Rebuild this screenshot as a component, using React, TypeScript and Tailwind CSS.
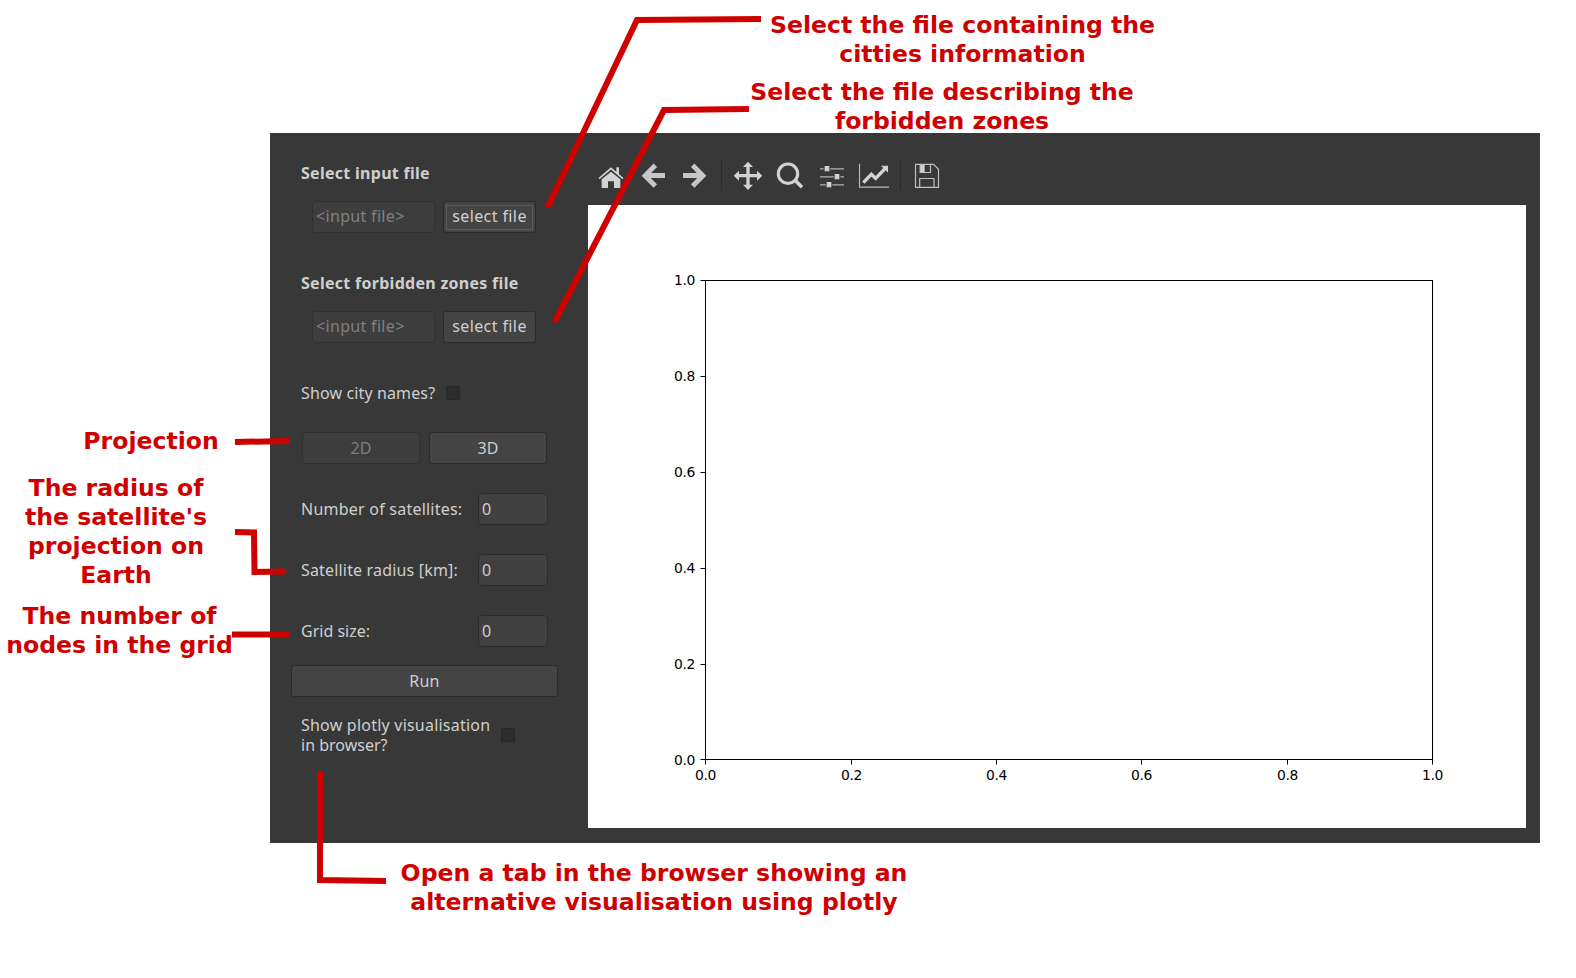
import type { ReactNode } from "react";

const BUTTON =
  "flex items-center justify-center rounded-[3px] border border-[#2b2b2b] bg-[#444444] text-[#cfcfcf]";
const BUTTON_DISABLED =
  "flex items-center justify-center rounded-[3px] border border-[#303030] bg-[#3d3d3d] text-[#7d7d7d]";
const INPUT = "flex items-center rounded-[4px] border border-[#2b2b2b] bg-[#404040] pl-[3px]";

function FileRow({ focused }: { focused?: boolean }) {
  return (
    <div className="ml-[42px] flex h-8 gap-2">
      <div className="flex w-[123px] items-center rounded-[4px] border border-[#303030] bg-[#3d3d3d] pb-[2px] pl-[3px] tracking-[0.32px] text-[#808080]">
        &lt;input file&gt;
      </div>
      <button className={`${BUTTON} w-[93px] p-[2px] tracking-[0.4px]`}>
        <span
          className={`flex h-[25px] w-[87px] items-center justify-center border pb-[2px] whitespace-nowrap ${
            focused ? "border-[#5a5a5a]" : "border-transparent"
          }`}
        >
          select file
        </span>
      </button>
    </div>
  );
}

function NumberRow({ label }: { label: string }) {
  return (
    <div className="ml-[31px] flex h-8 w-[247px] items-center justify-between">
      <span className="whitespace-nowrap">{label}</span>
      <div className={`${INPUT} h-8 w-[70px] pb-px`}>0</div>
    </div>
  );
}

function CheckBox() {
  return <span className="block size-[14px] rounded-[2px] border border-[#272727] bg-[#2d2d2d]" />;
}

function ToolIcon({ x, children }: { x: number; children: ReactNode }) {
  return (
    <svg className="h-[50px] w-[42px] shrink-0" viewBox={`${x} 30 126 150`} fill="#d2d2d2">
      {children}
    </svg>
  );
}

function Separator() {
  return (
    <div className="flex h-[50px] w-[11px] justify-center py-[10px]">
      <div className="w-px bg-[#2b2b2b]" />
    </div>
  );
}

function Toolbar() {
  return (
    <div className="flex h-[72px] pt-[17px] pl-[2px]">
      <ToolIcon x={30}>
        <path d="M57 116 L93 85 L129 116" fill="none" stroke="#d2d2d2" strokeWidth="5" />
        <path d="M109 82 h8 v25 l-8 -7 z" />
        <path d="M65 118 L93 95 L121 118 V144 H102 V124 H84 V144 H65 Z" />
      </ToolIcon>
      <ToolIcon x={156}>
        <path
          d="M255 106.500 H198 M226 76 L195 107 L226 138"
          fill="none"
          stroke="#c6c6c6"
          strokeWidth="14.500"
        />
      </ToolIcon>
      <ToolIcon x={282}>
        <path
          d="M309 106.500 H366 M338 76 L369 107 L338 138"
          fill="none"
          stroke="#c6c6c6"
          strokeWidth="14.500"
        />
      </ToolIcon>
      <Separator />
      <ToolIcon x={441}>
        <path d="M504 65 L519 81 H509 V102 H531 V92 L547 107 L531 122 V112 H509 V134 H519 L504 150 L489 134 H499 V112 H477 V122 L461 107 L477 92 V102 H499 V81 H489 Z" />
      </ToolIcon>
      <ToolIcon x={567}>
        <circle cx="624" cy="101" r="29" fill="none" stroke="#d2d2d2" strokeWidth="9.500" />
        <path d="M645 121 L666 142" stroke="#d2d2d2" strokeWidth="10.500" />
      </ToolIcon>
      <ToolIcon x={693}>
        <path
          d="M720 86.500 H792 M720 110.500 H792 M720 134.500 H792"
          stroke="#b4b4b4"
          strokeWidth="3.500"
        />
        <path
          d="M731 76 h20 v20 h-20 z M761 100 h20 v20 h-20 z M737 124 h20 v20 h-20 z"
          fill="#383838"
        />
        <path d="M734 78 h14 v16 h-14 z M764 102 h14 v16 h-14 z M740 126 h14 v16 h-14 z" />
      </ToolIcon>
      <ToolIcon x={819}>
        <path d="M838.500 71 V141.500 H927" fill="none" stroke="#b8b8b8" strokeWidth="3.500" />
        <path
          d="M850 128 L874 103 L887 115 L914 87"
          fill="none"
          stroke="#d2d2d2"
          strokeWidth="10"
        />
        <path d="M903 77 H924 V98 Z" />
      </ToolIcon>
      <Separator />
      <ToolIcon x={978}>
        <g fill="none" stroke="#c0c0c0" strokeWidth="3.500">
          <path d="M1006.500 73 H1061 L1075.500 88 V142 H1006.500 Z" />
          <path d="M1019 142 V115.500 H1062 V142" />
          <path d="M1020.500 73 V97.500 H1051.500 V73" />
        </g>
        <path d="M1021 74 h13 v23 h-13 z" />
      </ToolIcon>
    </div>
  );
}

const X_TICKS: [number, string][] = [
  [705, "0.0"],
  [851, "0.2"],
  [996, "0.4"],
  [1141, "0.6"],
  [1287, "0.8"],
  [1432, "1.0"],
];
const Y_TICKS: [number, string][] = [
  [280, "1.0"],
  [376, "0.8"],
  [472, "0.6"],
  [568, "0.4"],
  [664, "0.2"],
  [759, "0.0"],
];

function Plot() {
  return (
    <svg
      className="block h-[623px] w-[938px] bg-white font-['DejaVu_Sans',sans-serif] text-[13.9px] tracking-[-0.4px]"
      viewBox="588 205 938 623"
    >
      <rect x="705.5" y="280.5" width="727" height="479" fill="none" stroke="#000" />
      {X_TICKS.map(([x, label]) => (
        <g key={label}>
          <path d={`M${x + 0.5} 760 v4.500`} stroke="#000" />
          <text x={x + 0.5} y="780" textAnchor="middle">
            {label}
          </text>
        </g>
      ))}
      {Y_TICKS.map(([y, label]) => (
        <g key={label}>
          <path d={`M700.500 ${y + 0.5} h4.500`} stroke="#000" />
          <text x="695" y={y < 700 ? y + 5 : y + 6} textAnchor="end">
            {label}
          </text>
        </g>
      ))}
    </svg>
  );
}

function Controls() {
  return (
    <div className="flex w-[318px] shrink-0 flex-col pt-[30px] text-[16px] leading-5 text-[#cfcfcf]">
      <div className="mb-[18px] ml-[31px] h-5 font-bold tracking-[0.28px]">Select input file</div>
      <FileRow focused />
      <div className="mt-[40px] mb-[18px] ml-[31px] h-5 font-bold tracking-[0.28px]">
        Select forbidden zones file
      </div>
      <FileRow />
      <div className="mt-[40px] ml-[31px] flex h-5 items-center">
        <span className="w-[145px] tracking-[0.13px]">Show city names?</span>
        <CheckBox />
      </div>
      <div className="mt-[29px] ml-[32px] flex h-8 gap-[9px]">
        <button className={`${BUTTON_DISABLED} w-[118px]`}>2D</button>
        <button className={`${BUTTON} w-[118px]`}>3D</button>
      </div>
      <div className="mt-[29px] flex flex-col gap-[29px]">
        <div className="tracking-[0.23px]">
          <NumberRow label="Number of satellites:" />
        </div>
        <div className="tracking-[0.17px]">
          <NumberRow label="Satellite radius [km]:" />
        </div>
        <div>
          <NumberRow label="Grid size:" />
        </div>
      </div>
      <button className={`${BUTTON} mt-[18px] ml-[21px] h-8 w-[267px] tracking-[0.2px]`}>
        Run
      </button>
      <div className="mt-[18px] ml-[31px] flex items-center">
        <div className="w-[200px] whitespace-nowrap">
          <div className="tracking-[0.22px]">Show plotly visualisation</div>
          <div>in browser?</div>
        </div>
        <CheckBox />
      </div>
    </div>
  );
}

function Note({ className, lines }: { className: string; lines: string[] }) {
  return (
    <div
      className={`absolute -translate-x-1/2 text-center font-['DejaVu_Sans',sans-serif] text-[23.55px] leading-[29px] font-bold whitespace-nowrap text-[#cf0000] ${className}`}
    >
      {lines.map((line) => (
        <div key={line}>{line}</div>
      ))}
    </div>
  );
}

export default function App() {
  return (
    <div className="relative h-[978px] w-[1576px] overflow-hidden bg-white pt-[133px] pl-[270px]">
      <div className="flex h-[710px] w-[1270px] bg-[#383838] font-['Noto_Sans',sans-serif]">
        <Controls />
        <div className="flex flex-col">
          <Toolbar />
          <Plot />
        </div>
      </div>

      <svg
        className="pointer-events-none absolute inset-0"
        width="1576"
        height="978"
        fill="none"
        stroke="#cf0000"
        strokeWidth="6"
      >
        <path d="M761 19 L637 20 L547.500 207.500" />
        <path d="M749 109 L664 110 L554.500 322" />
        <path d="M235 442 L290 441" />
        <path d="M235 532 L254 532.500 L254.500 572 L286 571.500" />
        <path d="M232 634.500 H290" />
        <path d="M320 771 V880 L386 881" />
      </svg>

      <Note
        className="top-[11px] left-[962.5px]"
        lines={["Select the file containing the", "citties information"]}
      />
      <Note
        className="top-[78px] left-[942px]"
        lines={["Select the file describing the", "forbidden zones"]}
      />
      <Note className="top-[427px] left-[151px]" lines={["Projection"]} />
      <Note
        className="top-[474px] left-[116px]"
        lines={["The radius of", "the satellite's", "projection on", "Earth"]}
      />
      <Note
        className="top-[602px] left-[119.5px]"
        lines={["The number of", "nodes in the grid"]}
      />
      <Note
        className="top-[859px] left-[654px]"
        lines={["Open a tab in the browser showing an", "alternative visualisation using plotly"]}
      />
    </div>
  );
}
